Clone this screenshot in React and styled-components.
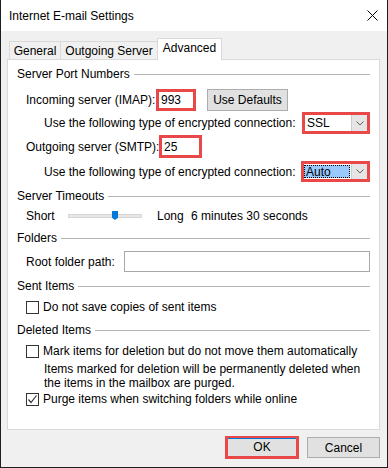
import React from 'react';
import styled, { createGlobalStyle } from 'styled-components';

const GlobalStyle = createGlobalStyle`
  html, body {
    margin: 0;
    padding: 0;
    background: #ffffff;
  }
  body {
    font-family: "Segoe UI", "Liberation Sans", Arial, sans-serif;
    font-size: 12px;
    color: #000000;
  }
  * {
    box-sizing: border-box;
  }
`;

const RED = '#e84848';

const Window = styled.div`
  width: 388px;
  height: 468px;
  display: flex;
  flex-direction: column;
  border: 1px solid #1e1e1e;
  border-top: none;
  background: #f0f0f0;
  white-space: nowrap;
`;

const TitleBar = styled.div`
  height: 31px;
  flex: none;
  display: flex;
  align-items: center;
  justify-content: space-between;
  padding: 0 9px 0 8px;
  background: #ffffff;
  font-size: 12px;
`;

const Body = styled.div`
  flex: 1;
  display: flex;
  flex-direction: column;
  padding: 7px 7px 0 6px;
`;

const TabRow = styled.div`
  display: flex;
  align-items: flex-end;
  height: 22px;
  padding-left: 2px;
  margin-bottom: -1px;
`;

const Tab = styled.div`
  width: ${(p) => p.$w}px;
  height: ${(p) => (p.$active ? 22 : 19)}px;
  margin-left: -1px;
  display: flex;
  align-items: center;
  justify-content: center;
  padding-bottom: ${(p) => (p.$active ? 3 : 0)}px;
  border: 1px solid #d9d9d9;
  border-bottom: none;
  background: ${(p) => (p.$active ? '#ffffff' : '#f0f0f0')};
  position: ${(p) => (p.$active ? 'relative' : 'static')};
  z-index: ${(p) => (p.$active ? 1 : 'auto')};
  &:first-child {
    margin-left: 0;
  }
`;

const Panel = styled.div`
  height: 371px;
  display: flex;
  flex-direction: column;
  padding: 6px 9px 0 9px;
  border: 1px solid #d9d9d9;
  background: #ffffff;
`;

const GroupHeader = styled.div`
  display: flex;
  align-items: center;
  gap: 4px;
  height: 16px;
  margin-top: ${(p) => p.$mt || 0}px;
  &::after {
    content: '';
    flex: 1;
    height: 1px;
    background: #b4b4b4;
  }
`;

const Row = styled.div`
  display: flex;
  align-items: center;
  height: ${(p) => p.$h || 16}px;
  margin-top: ${(p) => p.$mt || 0}px;
  margin-left: ${(p) => p.$indent || 9}px;
`;

const Label = styled.span`
  flex: none;
  width: ${(p) => (p.$w ? `${p.$w}px` : 'auto')};
`;

const PortBox = styled.div`
  width: ${(p) => p.$w}px;
  height: 100%;
  display: flex;
  align-items: center;
  padding-left: 2px;
  border: 3px solid ${RED};
  background: #ffffff;
`;

const Button = styled.div`
  width: ${(p) => p.$w}px;
  height: ${(p) => p.$h || 21}px;
  display: flex;
  align-items: center;
  justify-content: center;
  margin-left: ${(p) => p.$ml || 0}px;
  background: #e1e1e1;
  border: 1px solid #adadad;
`;

const Combo = styled.div`
  width: 69px;
  height: 100%;
  display: flex;
  align-items: stretch;
  border: 3px solid ${RED};
  background: #ffffff;
`;

const ComboValue = styled.div`
  flex: 1;
  display: flex;
  align-items: center;
  margin: 1px 1px 1px 0;
  padding-left: 2px;
  background: ${(p) => (p.$selected ? '#99c9ff' : 'transparent')};
  outline: ${(p) => (p.$selected ? '1px dotted #000' : 'none')};
  outline-offset: -1px;
`;

const ComboArrow = styled.div`
  width: 16px;
  display: flex;
  align-items: center;
  justify-content: center;
  background: #e5e5e5;
  border-left: 1px solid #cccccc;
`;

const Track = styled.div`
  position: relative;
  width: 74px;
  height: 4px;
  margin-right: 15px;
  background: #e7e7e7;
  border: 1px solid #d6d6d6;
`;

const Thumb = styled.div`
  position: absolute;
  left: 43px;
  top: -4px;
  width: 6px;
  height: 9px;
  background: #0078d7;
  clip-path: polygon(0 0, 100% 0, 100% 75%, 50% 100%, 0 75%);
`;

const TextBox = styled.div`
  flex: 1;
  height: 100%;
  border: 1px solid #a8a8a8;
  background: #ffffff;
`;

const CheckBox = styled.div`
  width: 13px;
  height: 13px;
  margin-right: 4px;
  display: flex;
  align-items: center;
  justify-content: center;
  border: 1px solid #333333;
  background: #ffffff;
`;

const Note = styled.div`
  margin: 4px 0 0 27px;
  line-height: 13.5px;
`;

const Footer = styled.div`
  display: flex;
  align-items: center;
  justify-content: flex-end;
  gap: 8px;
  height: 23px;
  margin-top: 6px;
`;

const DefaultButton = styled.div`
  width: 74px;
  height: 23px;
  display: flex;
  align-items: center;
  justify-content: center;
  border: 3px solid ${RED};
  border-top-width: 2px;
  background: #e1e1e1;
  box-shadow: inset 0 1px 0 #0078d7;
`;

const Chevron = () => (
  <svg width="8" height="5" viewBox="0 0 8 5">
    <path d="M0.5 0.5 L4 4 L7.5 0.5" fill="none" stroke="#606060" strokeWidth="1" />
  </svg>
);

const CloseIcon = () => (
  <svg width="11" height="11" viewBox="0 0 11 11">
    <path d="M0.5 0.5 L10.5 10.5 M10.5 0.5 L0.5 10.5" stroke="#000" strokeWidth="1" />
  </svg>
);

const Check = () => (
  <svg width="11" height="11" viewBox="0 0 11 11">
    <path d="M1.5 5.5 L4 8.5 L9.5 1.5" fill="none" stroke="#333" strokeWidth="1.2" />
  </svg>
);

const ComboBox = ({ value, selected }) => (
  <Combo>
    <ComboValue $selected={selected}>{value}</ComboValue>
    <ComboArrow>
      <Chevron />
    </ComboArrow>
  </Combo>
);

const Option = ({ checked, children, mt }) => (
  <Row $mt={mt}>
    <CheckBox>{checked && <Check />}</CheckBox>
    <span>{children}</span>
  </Row>
);

const App = () => (
  <>
    <GlobalStyle />
    <Window>
      <TitleBar>
        <span>Internet E-mail Settings</span>
        <CloseIcon />
      </TitleBar>
      <Body>
        <TabRow>
          <Tab $w={52}>General</Tab>
          <Tab $w={98}>Outgoing Server</Tab>
          <Tab $w={65} $active>Advanced</Tab>
        </TabRow>
        <Panel>
          <GroupHeader>Server Port Numbers</GroupHeader>
          <Row $h={22} $mt={7}>
            <Label $w={130}>Incoming server (IMAP):</Label>
            <PortBox $w={40}>993</PortBox>
            <Button $w={81} $h={22} $ml={11}>Use Defaults</Button>
          </Row>
          <Row $h={22} $mt={1} $indent={27}>
            <Label $w={258}>Use the following type of encrypted connection:</Label>
            <ComboBox value="SSL" />
          </Row>
          <Row $h={23} $mt={1}>
            <Label $w={133}>Outgoing server (SMTP):</Label>
            <PortBox $w={43}>25</PortBox>
          </Row>
          <Row $h={21} $mt={3} $indent={27}>
            <Label $w={257}>Use the following type of encrypted connection:</Label>
            <ComboBox value="Auto" selected />
          </Row>

          <GroupHeader $mt={6}>Server Timeouts</GroupHeader>
          <Row $mt={4}>
            <Label $w={42}>Short</Label>
            <Track>
              <Thumb />
            </Track>
            <Label $w={34}>Long</Label>
            <span>6 minutes 30 seconds</span>
          </Row>

          <GroupHeader $mt={6}>Folders</GroupHeader>
          <Row $h={21} $mt={5}>
            <Label $w={98}>Root folder path:</Label>
            <TextBox />
          </Row>

          <GroupHeader $mt={6}>Sent Items</GroupHeader>
          <Option mt={5}>Do not save copies of sent items</Option>

          <GroupHeader $mt={7}>Deleted Items</GroupHeader>
          <Option mt={5}>Mark items for deletion but do not move them automatically</Option>
          <Note>
            Items marked for deletion will be permanently deleted when
            <br />
            the items in the mailbox are purged.
          </Note>
          <Option mt={1} checked>Purge items when switching folders while online</Option>
        </Panel>
        <Footer>
          <DefaultButton>OK</DefaultButton>
          <Button $w={73} $h={21}>Cancel</Button>
        </Footer>
      </Body>
    </Window>
  </>
);

export default App;
